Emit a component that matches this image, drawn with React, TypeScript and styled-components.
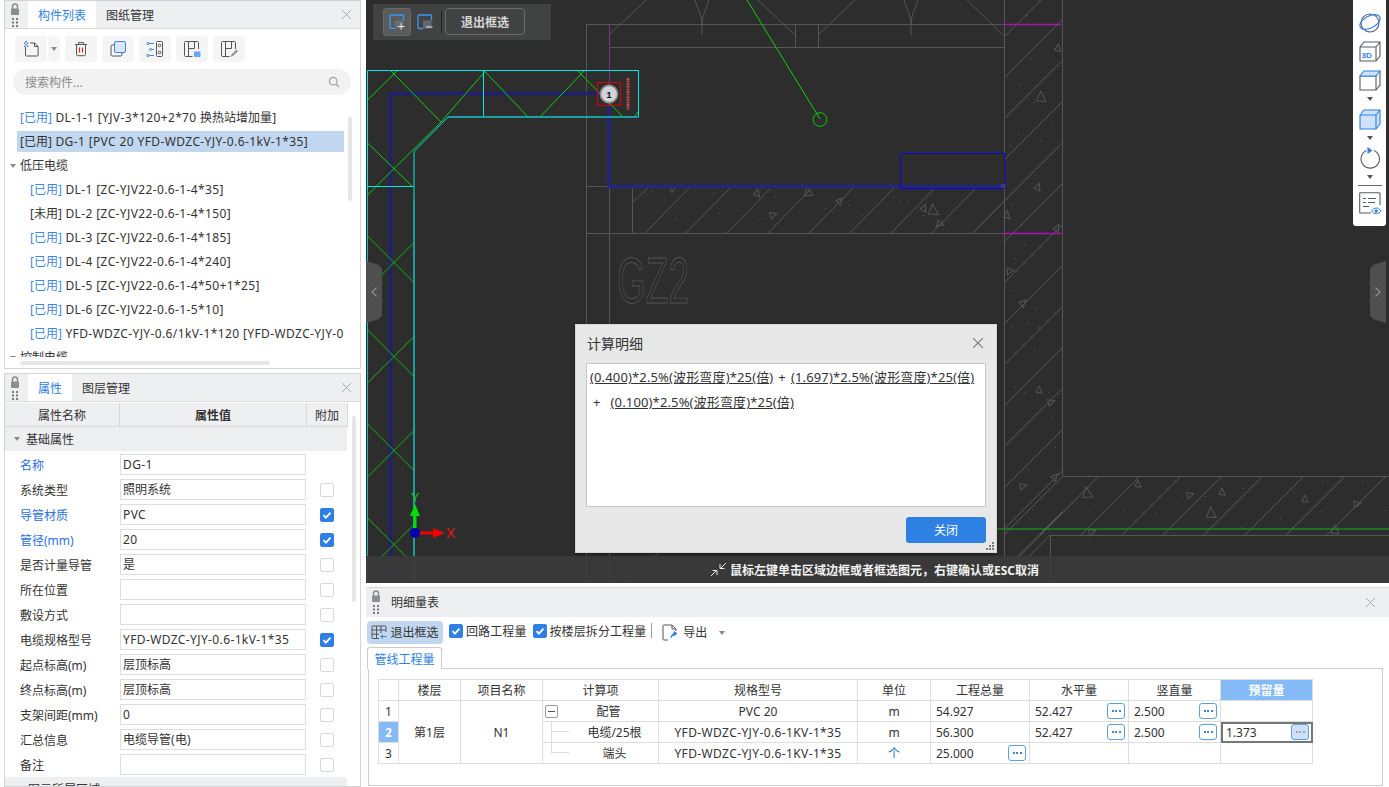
import React from 'react';
import styled, { createGlobalStyle } from 'styled-components';

const FONT = '"Noto Sans", "Noto Sans CJK SC", sans-serif';

const GlobalStyle = createGlobalStyle`
  html, body { margin: 0; height: 100%; overflow: hidden; background: #fff; }
  body { font-family: ${FONT}; font-size: 12px; color: #333; }
  #root { height: 100%; }
  * { box-sizing: border-box; }
`;

const Page = styled.div`
  display: flex;
  width: 1389px;
  height: 787px;
  overflow: hidden;
`;

const LeftColumn = styled.div`
  width: 366px;
  flex: none;
  padding-left: 4px;
  display: flex;
  flex-direction: column;
  gap: 4px;
`;

const RightColumn = styled.div`
  flex: 1;
  display: flex;
  flex-direction: column;
  gap: 4px;
  min-width: 0;
`;

const Panel = styled.section<{ $h: number }>`
  position: relative;
  width: 357px;
  height: ${p => p.$h}px;
  flex: none;
  border: 1px solid #d4d4d4;
  overflow: hidden;
`;

const PanelHeader = styled.div`
  display: flex;
  align-items: stretch;
  height: 28px;
  background: #eeeff1;
  border-bottom: 1px solid #d8d8d8;
  padding-left: 5px;
`;

const Grip = styled.div`
  width: 18px;
  flex: none;
  display: flex;
  align-items: center;
`;

const Tab = styled.div<{ $active?: boolean }>`
  display: flex;
  align-items: center;
  padding: 0 10px;
  font-size: 12px;
  color: ${p => (p.$active ? '#2c7fe3' : '#333')};
  background: ${p => (p.$active ? '#fff' : 'transparent')};
`;

const CloseBox = styled.div`
  margin-left: auto;
  width: 28px;
  display: flex;
  align-items: center;
  justify-content: center;
`;

const Toolbar = styled.div`
  display: flex;
  gap: 5px;
  padding: 7px 0 0 10px;
`;

const ToolButton = styled.div<{ $w?: number }>`
  width: ${p => p.$w ?? 32}px;
  height: 26px;
  background: #f5f5f5;
  border-radius: 4px;
  display: flex;
  align-items: center;
  justify-content: center;
`;

const SplitButton = styled.div`
  display: flex;
  gap: 1px;
`;

const SearchBox = styled.div`
  display: flex;
  align-items: center;
  justify-content: space-between;
  height: 26px;
  margin: 7px 9px 0 8px;
  padding: 0 11px 0 12px;
  border-radius: 13px;
  background: #f2f2f2;
  color: #8b8b8b;
`;

const TreeList = styled.div`
  height: 250px;
  margin: 11.5px 16px 0 5px;
  overflow: hidden;
`;

const TreeRow = styled.div<{ $indent?: number; $selected?: boolean; $group?: boolean }>`
  height: 21px;
  margin: 0 0 3px ${p => (p.$group ? 0 : 7)}px;
  padding-left: ${p => (p.$group ? 0 : p.$indent ?? 3)}px;
  line-height: 21px;
  white-space: nowrap;
  overflow: hidden;
  background: ${p => (p.$selected ? '#c0d7ef' : 'transparent')};
`;

const Used = styled.span<{ $plain?: boolean }>`
  color: ${p => (p.$plain ? '#333' : '#3f86e0')};
`;

const Latin = styled.span`
  letter-spacing: 0.38px;
`;

const TreeCaret = styled.span`
  display: inline-block;
  width: 0;
  height: 0;
  margin: 0 4px 2px 0;
  border-left: 3px solid transparent;
  border-right: 3px solid transparent;
  border-top: 4px solid #8a8a8a;
`;

const SplitCaret = styled(TreeCaret)`
  margin: 0;
`;

const VScroll = styled.div<{ $top: number; $h: number; $right: number }>`
  position: absolute;
  top: ${p => p.$top}px;
  right: ${p => p.$right}px;
  width: 4px;
  height: ${p => p.$h}px;
  border-radius: 2px;
  background: #e6e6e6;
`;

const HScroll = styled.div`
  position: absolute;
  left: 15px;
  bottom: 3px;
  width: 250px;
  height: 4px;
  border-radius: 2px;
  background: #e6e6e6;
`;

const PropHead = styled.div`
  display: grid;
  grid-template-columns: 115px 187px 41px;
  height: 24px;
  background: #eeeff1;
  border-bottom: 1px solid #d8d8d8;
  width: 343px;
  margin-top: 1px;
`;

const PropHeadCell = styled.div<{ $strong?: boolean }>`
  display: flex;
  align-items: center;
  justify-content: center;
  border-right: 1px solid #d8d8d8;
  font-weight: ${p => (p.$strong ? 600 : 400)};
`;

const PropGroup = styled.div`
  display: flex;
  align-items: center;
  width: 342px;
  height: 24px;
  padding-left: 9px;
  gap: 5px;
  background: #eeeff1;
`;

const GroupCaret = styled(TreeCaret)`
  margin: 0 1px 0 0;
`;

const SideCaret = styled.span`
  display: inline-block;
  width: 0;
  height: 0;
  margin: 0 3px 0 2px;
  border-top: 3px solid transparent;
  border-bottom: 3px solid transparent;
  border-left: 4px solid #8a8a8a;
`;

const PropRows = styled.div`
  padding-top: 1px;
`;

const PropRow = styled.div`
  display: grid;
  grid-template-columns: 115px 187px 41px;
  align-items: center;
  height: 25px;
`;

const PropLabel = styled.div<{ $blue?: boolean }>`
  padding-left: 15px;
  color: ${p => (p.$blue ? '#2c6fe0' : '#333')};
`;

const PropValue = styled.div`
  width: 186px;
  height: 21px;
  padding: 0 2px;
  line-height: 19px;
  border: 1px solid #dedede;
  background: #fff;
  white-space: nowrap;
  overflow: hidden;
`;

const CheckBox = styled.div<{ $on?: boolean; $offset?: number }>`
  width: 14px;
  height: 14px;
  flex: none;
  margin-left: ${p => p.$offset ?? 0}px;
  border-radius: 2px;
  border: 1px solid ${p => (p.$on ? '#2f80e4' : '#d8d8d8')};
  background: ${p => (p.$on ? '#2f80e4' : '#fff')};
  display: flex;
  align-items: center;
  justify-content: center;
`;

const Canvas = styled.div`
  position: relative;
  height: 583px;
  flex: none;
  background: #2d2d2d;
  overflow: hidden;
`;

const Drawing = styled.svg`
  position: absolute;
  inset: 0;
  width: 100%;
  height: 100%;
`;

const FrameTools = styled.div`
  position: absolute;
  left: 7px;
  top: 4px;
  width: 178px;
  height: 36px;
  padding: 4px 0 0 10px;
  display: flex;
  gap: 6px;
  background: #414343;
`;

const FrameToggle = styled.div<{ $on?: boolean; $w: number }>`
  width: ${p => p.$w}px;
  height: 28px;
  display: flex;
  align-items: center;
  justify-content: center;
  border-radius: 3px;
  background: ${p => (p.$on ? '#5a5c5c' : 'transparent')};
  border: ${p => (p.$on ? '1px solid #686a6a' : 'none')};
`;

const FrameSep = styled.div`
  width: 1px;
  height: 22px;
  margin: 3px -3px 0 2px;
  background: #222;
`;

const FrameExit = styled.div`
  width: 80px;
  height: 27px;
  display: flex;
  align-items: center;
  justify-content: center;
  border: 1px solid #6b6d6d;
  border-radius: 4px;
  color: #d8d8d8;
  font-weight: 700;
`;

const ViewTools = styled.div`
  position: absolute;
  right: 3px;
  top: 0;
  width: 33px;
  height: 226px;
  background: #fff;
  border-radius: 0 0 3px 3px;
  display: flex;
  flex-direction: column;
  align-items: center;
  padding-top: 11px;
`;

const ViewCaret = styled.div`
  width: 0;
  height: 0;
  margin: 5px 0 6px;
  border-left: 3px solid transparent;
  border-right: 3px solid transparent;
  border-top: 4px solid #555;
`;

const ViewIcon = styled.svg<{ $gap?: number }>`
  width: 24px;
  height: 24px;
  flex: none;
  margin-bottom: ${p => p.$gap ?? 0}px;
`;

const ViewSep = styled.div`
  width: 24px;
  height: 1px;
  margin-bottom: 5px;
  background: #666;
`;

const SideHandle = styled.div<{ $side: 'left' | 'right' }>`
  position: absolute;
  top: 261px;
  ${p => (p.$side === 'left' ? 'left: 0;' : 'right: 3px;')}
  width: 16px;
  height: 62px;
  background: #4f4f4f;
  clip-path: ${p =>
    p.$side === 'left'
      ? 'polygon(0 0, 80% 6%, 100% 12%, 100% 88%, 80% 94%, 0 100%)'
      : 'polygon(100% 0, 20% 6%, 0 12%, 0 88%, 20% 94%, 100% 100%)'};
  display: flex;
  align-items: center;
  justify-content: center;
`;

const StatusBar = styled.div`
  position: absolute;
  left: 0;
  right: 0;
  bottom: 0;
  height: 27px;
  padding-left: 344px;
  display: flex;
  align-items: center;
  gap: 3px;
  background: rgba(58, 58, 58, 0.93);
  color: #f2f2f2;
  font-weight: 700;
`;

const Dialog = styled.div`
  position: absolute;
  left: 209px;
  top: 324px;
  width: 422px;
  height: 229px;
  padding: 0 10px;
  background: #e8e8e8;
  border: 1px solid #d5d5d5;
  box-shadow: 0 1px 4px rgba(0, 0, 0, 0.4);
  display: flex;
  flex-direction: column;
`;

const DialogHead = styled.div`
  display: flex;
  align-items: center;
  justify-content: space-between;
  height: 38px;
  padding: 0 2px 2px 1px;
  font-size: 14px;
  flex: none;
`;

const DialogBody = styled.div`
  width: 400px;
  height: 144px;
  flex: none;
  padding: 0 3px;
  background: #fff;
  border: 1px solid #c6c6c6;
  font-size: 13px;
  letter-spacing: 0.14px;
`;

const CalcLine = styled.div`
  display: flex;
  align-items: center;
  height: 25px;
`;

const CalcLink = styled.span`
  text-decoration: underline;
  white-space: nowrap;
`;

const CalcPlus = styled.span<{ $l: number; $r: number }>`
  margin: 0 ${p => p.$r}px 0 ${p => p.$l}px;
`;

const DialogFoot = styled.div`
  display: flex;
  justify-content: flex-end;
  padding-top: 10px;
`;

const PrimaryButton = styled.div`
  width: 80px;
  height: 26px;
  display: flex;
  align-items: center;
  justify-content: center;
  border-radius: 3px;
  background: #2e80e3;
  color: #fff;
`;

const ResizeGrip = styled.svg`
  position: absolute;
  right: 1px;
  bottom: 1px;
  width: 10px;
  height: 10px;
`;

const BottomPanel = styled.section`
  flex: 1;
  min-height: 0;
  border-top: 1px solid #d8d8d8;
  display: flex;
  flex-direction: column;
`;

const BottomHead = styled.div`
  display: flex;
  align-items: center;
  height: 29px;
  flex: none;
  padding: 0 5px 1px;
  background: #eeeff1;
`;

const BottomTitle = styled.div`
  margin-left: 2px;
`;

const BottomBar = styled.div`
  display: flex;
  align-items: center;
  height: 30px;
  flex: none;
  padding-left: 1px;
`;

const ExitButton = styled.div`
  display: flex;
  align-items: center;
  justify-content: center;
  gap: 3px;
  width: 76px;
  height: 23px;
  border-radius: 4px;
  background: #c0d7ef;
  margin-right: 6px;
`;

const CheckItem = styled.label`
  display: flex;
  align-items: center;
  gap: 3px;
  margin-right: 6px;
  margin-top: -3px;
  letter-spacing: 0.1px;
`;

const BarSep = styled.div`
  width: 1px;
  height: 15px;
  margin: -3px 10px 0 -1px;
  background: #999;
`;

const ExportItem = styled.div`
  display: flex;
  align-items: center;
  gap: 5px;
`;

const ExportCaret = styled(TreeCaret)`
  margin: 1px 0 0 7px;
`;

const SheetTabs = styled.div`
  display: flex;
  padding-left: 1px;
  height: 21px;
  flex: none;
`;

const SheetTab = styled.div`
  position: relative;
  z-index: 1;
  width: 75px;
  height: 22px;
  display: flex;
  align-items: center;
  justify-content: center;
  color: #2c7fe3;
  background: #fff;
  border: 1px solid #ccc;
  border-bottom: none;
  border-radius: 3px 3px 0 0;
`;

const SheetBody = styled.div`
  flex: 1;
  margin: 0 6px 1px 2px;
  padding: 10px 10px 10px 9px;
  border: 1px solid #ccc;
`;

const Grid = styled.table`
  border-collapse: collapse;
  table-layout: fixed;
  width: 934px;
`;

const GridCol = styled.col<{ $w: number }>`
  width: ${p => p.$w}px;
`;

const Cell = styled.td<{ $kind?: 'on' | 'headOn'; $pad?: number; $left?: boolean }>`
  position: relative;
  height: 21px;
  padding: 0 0 0 ${p => p.$pad ?? 0}px;
  border: 1px solid #dedede;
  text-align: ${p => (p.$left ? 'left' : 'center')};
  background: ${p => (p.$kind ? '#84baf7' : '#fff')};
  color: ${p => (p.$kind ? '#fff' : '#333')};
  font-weight: ${p => (p.$kind ? 700 : 400)};
  white-space: nowrap;
`;

const ActiveCell = styled(Cell)`
  outline: 2px solid #777;
  outline-offset: -2px;
`;

const BlueUnit = styled.span`
  color: #2c6fa8;
`;

const MoreButton = styled.span<{ $soft?: boolean }>`
  position: absolute;
  right: 3px;
  top: 2px;
  width: 18px;
  height: 16px;
  border: 1px solid #5ea0dc;
  border-radius: 3px;
  background: ${p => (p.$soft ? '#cfe0f6' : '#fff')};
  display: flex;
  align-items: center;
  justify-content: center;
  gap: 1.5px;
`;

const MoreDot = styled.i<{ $soft?: boolean }>`
  width: 2px;
  height: 2px;
  background: ${p => (p.$soft ? '#9aa7b8' : '#3f86c8')};
`;

const MinusBox = styled.span`
  position: absolute;
  left: 2px;
  top: 4px;
  width: 13px;
  height: 13px;
  border: 1px solid #999;
  border-radius: 2px;
  background: #fff;
  display: flex;
  align-items: center;
  justify-content: center;
  z-index: 1;
  &::after {
    content: '';
    width: 7px;
    height: 1px;
    background: #555;
  }
`;

const TreeLink = styled.span<{ $last?: boolean }>`
  position: absolute;
  left: 8px;
  top: -1px;
  width: 17px;
  height: ${p => (p.$last ? 11 : 22)}px;
  border-left: 1px solid #dedede;
  &::after {
    content: '';
    position: absolute;
    left: 0;
    top: 10px;
    width: 17px;
    height: 1px;
    background: #dedede;
  }
`;

/* ---------- small drawn icons ---------- */

const LockGrip = () => (
  <svg width="10" height="26" viewBox="0 0 10 26">
    <path d="M2.5 7V4.5a2.5 2.5 0 0 1 5 0V7" fill="none" stroke="#8d8d8d" strokeWidth="1.5" />
    <rect x="1" y="6.5" width="8" height="6.5" rx="1" fill="#8d8d8d" />
    {[16, 19.5, 23].map(y => [2, 6].map(x => <rect key={`${x}-${y}`} x={x} y={y} width="2" height="2" fill="#7a7a7a" />))}
  </svg>
);

const CloseIcon = ({ size = 11, color = '#a8a8a8' }: { size?: number; color?: string }) => (
  <svg width={size} height={size} viewBox="0 0 11 11">
    <path d="M1 1l9 9M10 1l-9 9" stroke={color} strokeWidth="1" fill="none" />
  </svg>
);

const Tick = () => (
  <svg width="10" height="10" viewBox="0 0 10 10">
    <path d="M1.5 5.2l2.4 2.4 4.6-5" stroke="#fff" strokeWidth="1.8" fill="none" />
  </svg>
);

const NewIcon = () => (
  <svg width="18" height="18" viewBox="0 0 18 18" fill="none">
    <path d="M3.5 7v8.2c0 .5.3.8.8.8h11c.5 0 .8-.3.8-.8V6.5L12.5 3H8" stroke="#555" strokeWidth="1" />
    <path d="M12.5 3v3.5H16" stroke="#555" strokeWidth="1" />
    <path d="M2 2.5h1.4v1.4H2zM5 2.5h1.4v1.4H5zM3.5 4h1.4v1.4H3.5zM2 5.5h1.4v1.4H2zM5 5.5h1.4v1.4H5zM3.5 1h1.4v1.4H3.5z" fill="#3f86e0" />
  </svg>
);

const TrashIcon = () => (
  <svg width="18" height="18" viewBox="0 0 18 18" fill="none">
    <path d="M3 4.5h12M6.5 4.5V2.5h5v2M4.5 4.5v10c0 .8.5 1.2 1.2 1.2h6.6c.7 0 1.2-.4 1.2-1.2v-10" stroke="#555" />
    <path d="M7.5 7.5v5M10.5 7.5v5" stroke="#e02020" strokeWidth="1.2" />
  </svg>
);

const CopyIcon = () => (
  <svg width="18" height="18" viewBox="0 0 18 18" fill="none">
    <path d="M5 5H3.2C2.5 5 2 5.5 2 6.2v8.6c0 .7.5 1.2 1.2 1.2h8.6c.7 0 1.2-.5 1.2-1.2V13" stroke="#555" />
    <rect x="5.5" y="1.5" width="11" height="11" rx="1.5" fill="#d8e8fa" stroke="#3f86e0" />
  </svg>
);

const AttrIcon = () => (
  <svg width="18" height="18" viewBox="0 0 18 18" fill="none">
    <path d="M3 3.5h5M6 9.5h2M3 15.5h5" stroke="#3f86e0" />
    <circle cx="2" cy="3.5" r="1.1" stroke="#3f86e0" />
    <circle cx="4.5" cy="9.5" r="1.1" stroke="#3f86e0" />
    <circle cx="2" cy="15.5" r="1.1" stroke="#3f86e0" />
    <rect x="10.5" y="1.5" width="6" height="15" rx="1" stroke="#555" />
    <circle cx="13.5" cy="5.5" r="1.3" stroke="#555" />
    <circle cx="13.5" cy="12.5" r="1.3" stroke="#555" />
  </svg>
);

const SheetIcon = ({ pick }: { pick?: boolean }) => (
  <svg width="18" height="18" viewBox="0 0 18 18" fill="none">
    <path d="M9.5 16.5H2.5c-.6 0-1-.4-1-1v-13c0-.6.4-1 1-1h12c.6 0 1 .4 1 1V9" stroke="#555" />
    <path d="M5.5 2v14M5.5 8.5h6V2" stroke="#555" />
    {pick ? (
      <path d="M16.5 9.5l-5 5-1 2.5 2.5-1 5-5z" fill="#8a9199" />
    ) : (
      <rect x="11" y="11.5" width="6.5" height="5.5" rx=".8" fill="#6aa9ee" />
    )}
  </svg>
);

const Magnifier = () => (
  <svg width="12" height="12" viewBox="0 0 12 12" fill="none">
    <circle cx="5.2" cy="5.2" r="3.8" stroke="#a0a0a0" strokeWidth="1.2" />
    <path d="M8 8l3 3" stroke="#a0a0a0" strokeWidth="1.2" />
  </svg>
);

const FrameIcon = ({ minus }: { minus?: boolean }) => (
  <svg width="16" height="16" viewBox="0 0 16 16" fill="none">
    <path d="M6 14.5H2c-.6 0-1-.4-1-1V2c0-.6.4-1 1-1h11.5c.6 0 1 .4 1 1v4.5" stroke="#3d96f5" strokeWidth="1.3" />
    <rect x="6" y="6.5" width="8.5" height="8" fill="#6d7683" opacity=".75" />
    <path d={minus ? 'M9 13h6.5' : 'M9 12.5h6.5M12.2 9.2v6.6'} stroke="#e8e8e8" strokeWidth="1" />
  </svg>
);

const Chevron = ({ dir }: { dir: 'left' | 'right' }) => (
  <svg width="8" height="12" viewBox="0 0 8 12" fill="none">
    <path d={dir === 'left' ? 'M6.5 1.5L2 6l4.5 4.5' : 'M1.5 1.5L6 6l-4.5 4.5'} stroke="#8f8f8f" strokeWidth="1.2" />
  </svg>
);

const CollapseIcon = () => (
  <svg width="17" height="15" viewBox="0 0 17 15" fill="none">
    <path d="M1 14l6-6M2.5 8.5H7V13M16 1l-6 6M14.5 6.5H10V2" stroke="#eee" strokeWidth="1" />
  </svg>
);

const TableArrowIcon = () => (
  <svg width="16" height="15" viewBox="0 0 16 15" fill="none">
    <path d="M8 13.5H1.5a.5.5 0 0 1-.5-.5V1.5c0-.3.2-.5.5-.5h13c.3 0 .5.2.5.5V7M1 5h14M1 9.2h7M5.5 1v12.5M10 1v7" stroke="#555" />
    <path d="M15.5 11.5H10M12 9.5l-2.2 2 2.2 2" stroke="#2c7fe3" />
  </svg>
);

const ExportIcon = () => (
  <svg width="16" height="17" viewBox="0 0 16 17" fill="none">
    <path d="M6 16H2c-.6 0-1-.4-1-1V2c0-.6.4-1 1-1h8l4 4v2M10 1v4h4" stroke="#555" />
    <path d="M9 14c0-3 1.5-4.5 4-4.5M12 7.5l3 2-3 2.5z" fill="#2c7fe3" stroke="#2c7fe3" strokeWidth=".8" />
  </svg>
);

/* ---------- CAD sheet ---------- */

const range = (n: number) => Array.from({ length: n }, (_, i) => i);

const triangles: [number, number, number, number][] = [
  [757, 193, 4, 10], [808, 192, 5, -10], [773, 215, 4, 70], [840, 201, 4, 40], [924, 208, 4, 20],
  [933, 210, 6, -5], [940, 224, 4, 100], [1007, 215, 4, 5], [1058, 48, 4, 10], [1041, 97, 6, 0],
  [1038, 187, 4, 20], [1010, 271, 4, 80], [1023, 303, 4, 40], [1039, 390, 4, 0], [1051, 402, 4, 70],
  [1023, 486, 4, 75], [1055, 477, 4, 40], [1087, 493, 6, -10], [1138, 484, 4, 0], [1190, 495, 4, 70],
  [1222, 492, 4, 0], [1211, 513, 6, -5], [1305, 499, 4, 0], [1357, 504, 4, 80], [1092, 532, 4, 70],
  [1335, 530, 5, 0], [673, 188, 4, 60], [1057, 228, 4, 30],
];

const specks: [number, number][] = [
  [645, 193], [651, 191], [675, 218], [713, 193], [719, 213], [738, 210], [758, 220], [762, 218],
  [775, 196], [799, 212], [825, 208], [833, 212], [848, 205], [862, 215], [893, 197], [899, 201],
  [907, 201], [923, 215], [948, 220], [1012, 205], [1021, 225], [1027, 15], [1030, 58], [1020, 85],
  [1026, 96], [1033, 102], [1052, 124], [1018, 135], [1040, 140], [1010, 145], [1035, 175], [1050, 180],
  [1015, 258], [1024, 244], [1013, 290], [1036, 309], [1011, 327], [1028, 322], [1039, 327], [1034, 351],
  [1015, 387], [1024, 392], [1048, 392], [1052, 417], [1018, 462], [1028, 470], [1055, 447], [1032, 509],
  [1029, 518], [1094, 505], [1102, 513], [1124, 510], [1156, 513], [1182, 497], [1205, 496], [1243, 488],
  [1280, 518], [1294, 492], [1322, 480], [1321, 511], [1362, 480], [1385, 510], [1292, 527], [1241, 527],
];

const greenCross = [236, 330, 424, 518];

const CadSheet = () => (
  <Drawing viewBox="366 0 1023 583">
    <g stroke="#565656" strokeWidth="1" fill="none">
      <path d="M586.5 24V583M609.5 47V583M586.5 24.5H1004M609.5 47.5H1004M795.5 24V47M818.5 24V47" />
      <path d="M586 186.5H1004M586 233.5H1004M632.5 186V233M1004.5 0V583M1062.5 0V476.5H1389M1050.5 583V535.5H1389" />
      <path d="M609 35L646 0M758 0L795 35M818 35L855 0M967 0L1004 36" />
      <path d="M695 0C698 10 702 15 702 25C702 15 706 10 709 0M702 25V35M904 0C907 10 911 15 911 25C911 15 915 10 918 0M911 25V35" />
      {range(9).map(i => (
        <path key={`a${i}`} d={`M${645 + i * 41} 233L${691 + i * 41} 186`} />
      ))}
      <path d="M632 203L650 186M973 233L1004 201" />
      {range(14).map(i => (
        <path key={`b${i}`} d={`M1004 ${37 + i * 41}L1062 ${-21 + i * 41}`} />
      ))}
      {range(8).map(i => (
        <path key={`c${i}`} d={`M${1098 + i * 41} 477L${1040 + i * 41} 535`} />
      ))}
      <path d="M1098 477L1014 562M1062 477L1004 535M1050 535L1003 583" />
      {triangles.map(([x, y, s, r]) => (
        <path key={`${x}-${y}`} d={`M${x} ${y - s}L${x + s * 0.8} ${y + s * 0.8}L${x - s * 0.8} ${y + s * 0.6}Z`} transform={`rotate(${r} ${x} ${y})`} />
      ))}
      <text x="617" y="303" fontFamily="Liberation Sans, sans-serif" fontSize="64" textLength="72" lengthAdjust="spacingAndGlyphs" strokeWidth="0.9">GZ2</text>
    </g>
    {specks.map(([x, y]) => (
      <rect key={`${x}:${y}`} x={x} y={y} width="1" height="1" fill="#5a5a5a" />
    ))}
    <path d="M1004 24.5H1061M1004 233.5H1061" stroke="#b010b0" strokeWidth="1.5" />
    <path d="M997 529H1389" stroke="#16b416" strokeWidth="1" />
    <path d="M623 583L660 552" stroke="#0e9a0e" strokeWidth="1" />

    <g stroke="#20206e" strokeWidth="3.5" fill="none">
      <path d="M390.5 583V93.5H600" />
      <path d="M609 105V186.5H1003" stroke="#252580" />
    </g>
    <path d="M609.5 24V96" stroke="#80307f" strokeWidth="1" />

    <g stroke="#0fd00f" strokeWidth="1" fill="none">
      <path d="M367.5 100L398 70M390 70L441 122M367.5 195L441 122L485 71.5L528 117M540 117L585 70M577 70L623 117M634 117L638 112M367.5 143L413 187" />
      {greenCross.map(y => (
        <path key={y} d={`M367.5 ${y}L413.5 ${y + 46}M413.5 ${y + 7}L367.5 ${y + 53}`} stroke="#10b810" />
      ))}
      <path d="M747 0L820 119" />
      <circle cx="820" cy="119.5" r="6.8" stroke="#00d400" />
    </g>

    <g fill="none" stroke="#00e8e8" strokeWidth="1">
      <path d="M367.5 583V70.5H638.5V117M483.5 70.5V117M367.5 186.5H413.5M448 117L414 151.5V583" />
      <path d="M448 117H638.5" stroke="#1c9d9d" strokeWidth="2" />
      <path d="M367.5 190V583M414 200V583" stroke="#1fb4b4" />
    </g>

    <rect x="900.5" y="153.5" width="104" height="35" fill="none" stroke="#0808d8" strokeWidth="1" />
    <circle cx="1003" cy="186" r="2.4" fill="#3a3a9a" />
    <path d="M628 78V110" stroke="#b04a4a" strokeWidth="3" strokeDasharray="2 .6" />
    <circle cx="609" cy="94" r="8.6" fill="#d2d2dc" stroke="#8c8c8c" strokeWidth="1.6" />
    <text x="609" y="97.5" textAnchor="middle" fontFamily="Liberation Sans, sans-serif" fontWeight="700" fontSize="9" fill="#000">1</text>
    <rect x="597.5" y="82.5" width="23" height="23" fill="none" stroke="#e00000" strokeWidth="1" />

    <path d="M415 530V512" stroke="#00e000" strokeWidth="3" />
    <path d="M415 504L420 516H410Z" fill="#00e000" />
    <path d="M419 533H434" stroke="#f00000" strokeWidth="3" />
    <path d="M445 533L433 528V538Z" fill="#f00000" />
    <circle cx="415" cy="533" r="5" fill="#0000b4" />
    <text x="415" y="502" textAnchor="middle" fontFamily="Liberation Sans, sans-serif" fontSize="13" fill="#16c416">Y</text>
    <text x="446" y="538" fontFamily="Liberation Sans, sans-serif" fontSize="14" fill="#f01010">X</text>
  </Drawing>
);

/* ---------- data ---------- */

const treeRows = [
  { used: '[已用]', text: ' DL-1-1 [YJV-3*120+2*70 换热站增加量]' },
  { used: '[已用]', text: ' DG-1 [PVC 20 YFD-WDZC-YJY-0.6-1kV-1*35]', selected: true, plain: true },
  { group: '低压电缆' },
  { used: '[已用]', text: ' DL-1 [ZC-YJV22-0.6-1-4*35]', indent: 13 },
  { used: '[未用]', text: ' DL-2 [ZC-YJV22-0.6-1-4*150]', indent: 13, plain: true },
  { used: '[已用]', text: ' DL-3 [ZC-YJV22-0.6-1-4*185]', indent: 13 },
  { used: '[已用]', text: ' DL-4 [ZC-YJV22-0.6-1-4*240]', indent: 13 },
  { used: '[已用]', text: ' DL-5 [ZC-YJV22-0.6-1-4*50+1*25]', indent: 13 },
  { used: '[已用]', text: ' DL-6 [ZC-YJV22-0.6-1-5*10]', indent: 13 },
  { used: '[已用]', text: ' YFD-WDZC-YJY-0.6/1kV-1*120 [YFD-WDZC-YJY-0.6/1kV-1*120]', indent: 13 },
  { group: '控制电缆' },
];

const propRows: { label: string; value: string; blue?: boolean; check?: boolean; noBox?: boolean }[] = [
  { label: '名称', value: 'DG-1', blue: true, noBox: true },
  { label: '系统类型', value: '照明系统' },
  { label: '导管材质', value: 'PVC', blue: true, check: true },
  { label: '管径(mm)', value: '20', blue: true, check: true },
  { label: '是否计量导管', value: '是' },
  { label: '所在位置', value: '' },
  { label: '敷设方式', value: '' },
  { label: '电缆规格型号', value: 'YFD-WDZC-YJY-0.6-1kV-1*35', check: true },
  { label: '起点标高(m)', value: '层顶标高' },
  { label: '终点标高(m)', value: '层顶标高' },
  { label: '支架间距(mm)', value: '0' },
  { label: '汇总信息', value: '电缆导管(电)' },
  { label: '备注', value: '' },
];

const colWidths = [20, 62, 82, 116, 199, 73, 99, 99, 92, 92];

// latin runs are set a touch wider than the CJK ones, as in the original UI font
const Mixed = ({ text }: { text: string }) => (
  <>
    {text.split(/([\u4e00-\u9fff]+)/).map((part, i) => (i % 2 ? part : <Latin key={i}>{part}</Latin>))}
  </>
);

const More = ({ soft }: { soft?: boolean }) => (
  <MoreButton $soft={soft}>
    {range(3).map(i => (
      <MoreDot key={i} $soft={soft} />
    ))}
  </MoreButton>
);

function ComponentPanel() {
  return (
    <Panel $h={369}>
      <PanelHeader>
        <Grip><LockGrip /></Grip>
        <Tab $active>构件列表</Tab>
        <Tab>图纸管理</Tab>
        <CloseBox><CloseIcon /></CloseBox>
      </PanelHeader>
      <Toolbar>
        <SplitButton>
          <ToolButton><NewIcon /></ToolButton>
          <ToolButton $w={12}><SplitCaret /></ToolButton>
        </SplitButton>
        <ToolButton><TrashIcon /></ToolButton>
        <ToolButton><CopyIcon /></ToolButton>
        <ToolButton><AttrIcon /></ToolButton>
        <ToolButton><SheetIcon /></ToolButton>
        <ToolButton><SheetIcon pick /></ToolButton>
      </Toolbar>
      <SearchBox>
        搜索构件...
        <Magnifier />
      </SearchBox>
      <TreeList>
        {treeRows.map((r, i) =>
          r.group ? (
            <TreeRow key={i} $group>
              <TreeCaret />
              {r.group}
            </TreeRow>
          ) : (
            <TreeRow key={i} $indent={r.indent} $selected={r.selected}>
              <Used $plain={r.plain}>{r.used}</Used>
              <Mixed text={r.text as string} />
            </TreeRow>
          ),
        )}
      </TreeList>
      <VScroll $top={116} $h={84} $right={8} />
      <HScroll />
    </Panel>
  );
}

function PropertyPanel() {
  return (
    <Panel $h={414}>
      <PanelHeader>
        <Grip><LockGrip /></Grip>
        <Tab $active>属性</Tab>
        <Tab>图层管理</Tab>
        <CloseBox><CloseIcon /></CloseBox>
      </PanelHeader>
      <PropHead>
        <PropHeadCell>属性名称</PropHeadCell>
        <PropHeadCell $strong>属性值</PropHeadCell>
        <PropHeadCell>附加</PropHeadCell>
      </PropHead>
      <PropGroup>
        <GroupCaret />
        基础属性
      </PropGroup>
      <PropRows>
        {propRows.map(r => (
          <PropRow key={r.label}>
            <PropLabel $blue={r.blue}>{r.label}</PropLabel>
            <PropValue><Mixed text={r.value} /></PropValue>
            {r.noBox ? (
              <span />
            ) : (
              <CheckBox $on={r.check} $offset={13}>{r.check && <Tick />}</CheckBox>
            )}
          </PropRow>
        ))}
      </PropRows>
      <PropGroup>
        <SideCaret />
        图元所属区域
      </PropGroup>
      <VScroll $top={42} $h={186} $right={4} />
    </Panel>
  );
}

function ViewToolbar() {
  return (
    <ViewTools>
      <ViewIcon viewBox="0 0 24 24" fill="none" $gap={4}>
        <circle cx="12" cy="12" r="9" stroke="#5a6270" strokeWidth="1.1" />
        <ellipse cx="12" cy="11" rx="11" ry="6" transform="rotate(-28 12 11)" stroke="#2f80e4" strokeWidth="1.1" />
      </ViewIcon>
      <ViewIcon viewBox="0 0 24 24" fill="none" $gap={5}>
        <path d="M2 8h16v14H2zM2 8l4-5h16v14l-4 5M18 8l4-5" stroke="#555b66" strokeWidth="1.1" />
        <text x="3.5" y="19" fontFamily="Liberation Sans, sans-serif" fontWeight="700" fontSize="8" fill="#2f80e4">3D</text>
      </ViewIcon>
      <ViewIcon viewBox="0 0 24 24" fill="none">
        <path d="M2 8h16v14H2zM18 22l4-5V3" stroke="#555b66" strokeWidth="1.1" />
        <path d="M2 8l4-5h16l-4 5z" fill="#cfe2fa" stroke="#2f80e4" strokeWidth="1.1" />
      </ViewIcon>
      <ViewCaret />
      <ViewIcon viewBox="0 0 24 24" fill="none">
        <path d="M2 8l4-5h16v14l-4 5H2z" fill="#cfe2fa" stroke="#2f80e4" strokeWidth="1.1" />
        <path d="M2 8h16v14M18 8l4-5" stroke="#2f80e4" strokeWidth="1.1" />
      </ViewIcon>
      <ViewCaret />
      <ViewIcon viewBox="0 0 24 24" fill="none">
        <path d="M8.5 4.5a9.2 9.2 0 1 0 7.5 0" stroke="#555b66" strokeWidth="1.1" />
        <path d="M9.5 1l5 3.5-5 3.5z" fill="#2f80e4" />
      </ViewIcon>
      <ViewCaret />
      <ViewSep />
      <ViewIcon viewBox="0 0 24 24" fill="none">
        <path d="M13 22H2.5c-.5 0-.8-.3-.8-.8V2.5c0-.5.3-.8.8-.8h18.7c.5 0 .8.3.8.8V14" stroke="#555b66" strokeWidth="1.1" />
        <path d="M5 7.5h3M10 7.5h8M5 11.5h3M10 11.5h7M5 15.5h6" stroke="#555b66" />
        <path d="M13.5 20c2.6-4 7-4 9.5 0-2.5 3.6-7 3.6-9.5 0z" fill="#fff" stroke="#2f80e4" />
        <circle cx="18.2" cy="20" r="1.7" fill="#2f80e4" />
      </ViewIcon>
    </ViewTools>
  );
}

function CalcDialog() {
  return (
    <Dialog>
      <DialogHead>
        计算明细
        <CloseIcon size={12} color="#777" />
      </DialogHead>
      <DialogBody>
        <CalcLine>
          <CalcLink>(0.400)*2.5%(波形弯度)*25(倍)</CalcLink>
          <CalcPlus $l={5} $r={5}>+</CalcPlus>
          <CalcLink>(1.697)*2.5%(波形弯度)*25(倍)</CalcLink>
        </CalcLine>
        <CalcLine>
          <CalcPlus $l={3} $r={10}>+</CalcPlus>
          <CalcLink>(0.100)*2.5%(波形弯度)*25(倍)</CalcLink>
        </CalcLine>
      </DialogBody>
      <DialogFoot>
        <PrimaryButton>关闭</PrimaryButton>
      </DialogFoot>
      <ResizeGrip viewBox="0 0 10 10">
        <path d="M7 1h2v2H7zM4 4h2v2H4zM7 4h2v2H7zM1 7h2v2H1zM4 7h2v2H4zM7 7h2v2H7z" fill="#777" />
      </ResizeGrip>
    </Dialog>
  );
}

function QuantityPanel() {
  return (
    <BottomPanel>
      <BottomHead>
        <Grip><LockGrip /></Grip>
        <BottomTitle>明细量表</BottomTitle>
        <CloseBox><CloseIcon /></CloseBox>
      </BottomHead>
      <BottomBar>
        <ExitButton><TableArrowIcon />退出框选</ExitButton>
        <CheckItem><CheckBox $on><Tick /></CheckBox>回路工程量</CheckItem>
        <CheckItem><CheckBox $on><Tick /></CheckBox>按楼层拆分工程量</CheckItem>
        <BarSep />
        <ExportItem>
          <ExportIcon />
          导出
          <ExportCaret />
        </ExportItem>
      </BottomBar>
      <SheetTabs>
        <SheetTab>管线工程量</SheetTab>
      </SheetTabs>
      <SheetBody>
        <Grid>
          <colgroup>
            {colWidths.map((w, i) => (
              <GridCol key={i} $w={w} />
            ))}
          </colgroup>
          <tbody>
            <tr>
              <Cell />
              <Cell>楼层</Cell>
              <Cell>项目名称</Cell>
              <Cell>计算项</Cell>
              <Cell>规格型号</Cell>
              <Cell>单位</Cell>
              <Cell>工程总量</Cell>
              <Cell>水平量</Cell>
              <Cell>竖直量</Cell>
              <Cell $kind="headOn">预留量</Cell>
            </tr>
            <tr>
              <Cell>1</Cell>
              <Cell rowSpan={3}>第1层</Cell>
              <Cell rowSpan={3}>N1</Cell>
              <Cell $pad={16}><MinusBox />配管</Cell>
              <Cell>PVC 20</Cell>
              <Cell>m</Cell>
              <Cell $left $pad={5}>54.927</Cell>
              <Cell $left $pad={5}>52.427<More /></Cell>
              <Cell $left $pad={5}>2.500<More /></Cell>
              <Cell />
            </tr>
            <tr>
              <Cell $kind="on">2</Cell>
              <Cell $pad={28}><TreeLink />电缆/25根</Cell>
              <Cell><Mixed text="YFD-WDZC-YJY-0.6-1KV-1*35" /></Cell>
              <Cell>m</Cell>
              <Cell $left $pad={5}>56.300</Cell>
              <Cell $left $pad={5}>52.427<More /></Cell>
              <Cell $left $pad={5}>2.500<More /></Cell>
              <ActiveCell $left $pad={5}>1.373<More soft /></ActiveCell>
            </tr>
            <tr>
              <Cell>3</Cell>
              <Cell $pad={28}><TreeLink $last />端头</Cell>
              <Cell><Mixed text="YFD-WDZC-YJY-0.6-1KV-1*35" /></Cell>
              <Cell><BlueUnit>个</BlueUnit></Cell>
              <Cell $left $pad={5}>25.000<More /></Cell>
              <Cell />
              <Cell />
              <Cell />
            </tr>
          </tbody>
        </Grid>
      </SheetBody>
    </BottomPanel>
  );
}

export default function App() {
  return (
    <Page>
      <GlobalStyle />
      <LeftColumn>
        <ComponentPanel />
        <PropertyPanel />
      </LeftColumn>
      <RightColumn>
        <Canvas>
          <CadSheet />
          <FrameTools>
            <FrameToggle $on $w={28}><FrameIcon /></FrameToggle>
            <FrameToggle $w={16}><FrameIcon minus /></FrameToggle>
            <FrameSep />
            <FrameExit>退出框选</FrameExit>
          </FrameTools>
          <ViewToolbar />
          <SideHandle $side="left"><Chevron dir="left" /></SideHandle>
          <SideHandle $side="right"><Chevron dir="right" /></SideHandle>
          <StatusBar>
            <CollapseIcon />
            鼠标左键单击区域边框或者框选图元，右键确认或ESC取消
          </StatusBar>
          <CalcDialog />
        </Canvas>
        <QuantityPanel />
      </RightColumn>
    </Page>
  );
}
